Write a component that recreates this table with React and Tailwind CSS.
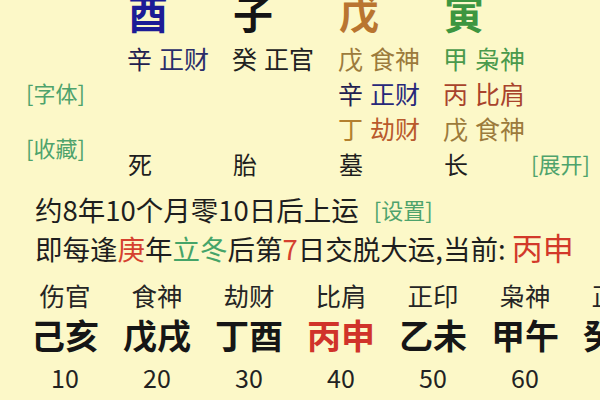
const pillars = [
  { big: '酉', bigColor: 'text-[#1c1c96]', sub: [{ gan: '辛', god: '正财', gc: 'text-[#1f2050]', sc: 'text-[#2a2d6a]' }], life: '死' },
  { big: '子', bigColor: 'text-[#141414]', sub: [{ gan: '癸', god: '正官', gc: 'text-[#222]', sc: 'text-[#222]' }], life: '胎' },
  {
    big: '戊',
    bigColor: 'text-[#b97530]',
    sub: [
      { gan: '戊', god: '食神', gc: 'text-[#9c7b3c]', sc: 'text-[#9c7b3c]' },
      { gan: '辛', god: '正财', gc: 'text-[#1f2050]', sc: 'text-[#27287a]' },
      { gan: '丁', god: '劫财', gc: 'text-[#b3802f]', sc: 'text-[#b95a2c]' },
    ],
    life: '墓',
  },
  {
    big: '寅',
    bigColor: 'text-[#3d9640]',
    sub: [
      { gan: '甲', god: '枭神', gc: 'text-[#4a9a4c]', sc: 'text-[#4a9a4c]' },
      { gan: '丙', god: '比肩', gc: 'text-[#a8432c]', sc: 'text-[#a8432c]' },
      { gan: '戊', god: '食神', gc: 'text-[#9c7b3c]', sc: 'text-[#9c7b3c]' },
    ],
    life: '长',
  },
]

const dayun = [
  { god: '伤官', gz: '己亥', age: 10 },
  { god: '食神', gz: '戊戌', age: 20 },
  { god: '劫财', gz: '丁酉', age: 30 },
  { god: '比肩', gz: '丙申', age: 40, current: true },
  { god: '正印', gz: '乙未', age: 50 },
  { god: '枭神', gz: '甲午', age: 60 },
  { god: '正官', gz: '癸巳', age: 70 },
]

function Link({ children, className = '' }) {
  return <span className={'text-[#4ea36c] text-[22px] ' + className}>[{children}]</span>
}

export default function App() {
  return (
    <div className="w-[600px] h-[400px] overflow-hidden bg-[#fcf8c8] text-[#1e1e1e] font-['Noto_Sans_CJK_SC',sans-serif]">
      {/* 四柱 */}
      <div className="flex">
        <div className="w-[127px] shrink-0 pl-[26px] pt-[78px] flex flex-col leading-[28px]">
          <Link>字体</Link>
          <Link className="mt-[27px]">收藏</Link>
        </div>
        <div className="flex-1 grid grid-cols-[105px_106px_105px_1fr] -mt-[8px]">
          {pillars.map((p) => (
            <div key={p.big} className="flex flex-col">
              <div className={'text-[40px] leading-[40px] font-bold pl-[1px] ' + p.bigColor}>{p.big}</div>
              <div className="mt-[9px] h-[105px] text-[25px] leading-[35px]">
                {p.sub.map((s, i) => (
                  <div key={i} className="flex whitespace-nowrap">
                    <span className={s.gc}>{s.gan}</span>
                    <span className={'ml-[7px] ' + s.sc}>{s.god}</span>
                  </div>
                ))}
              </div>
              <div className="flex items-center text-[24px] leading-[35px] whitespace-nowrap">
                <span className="pl-[1px]">{p.life}</span>
                {p.life === '长' && <Link className="ml-auto mr-[10px]">展开</Link>}
              </div>
            </div>
          ))}
        </div>
      </div>

      {/* 起运 */}
      <div className="pl-[35px] mt-[9px] text-[27.5px] leading-[38px] whitespace-nowrap">
        <div className="flex items-center">
          <span>约8年10个月零10日后上运</span>
          <Link className="ml-[15px]">设置</Link>
        </div>
        <div>
          即每逢<span className="text-[#d5402f]">庚</span>年<span className="text-[#45a468]">立冬</span>后第
          <span className="text-[#d5402f]">7</span>日交脱大运,当前:{' '}
          <span className="text-[31px] text-[#d2392a]">丙申</span>
        </div>
      </div>

      {/* 大运 */}
      <div className="pl-[19px] mt-[12px] flex whitespace-nowrap">
        {dayun.map((d) => (
          <div key={d.age} className="w-[92px] shrink-0 flex flex-col items-center">
            <div className="text-[25.5px] leading-[32px] text-[#252525]">{d.god}</div>
            <div className={'mt-[3px] text-[34px] leading-[42px] font-bold ' + (d.current ? 'text-[#d0332a]' : 'text-[#161616]')}>
              {d.gz}
            </div>
            <div className="mt-[6px] text-[25px] leading-[30px] text-[#222]">{d.age}</div>
          </div>
        ))}
      </div>
    </div>
  )
}
